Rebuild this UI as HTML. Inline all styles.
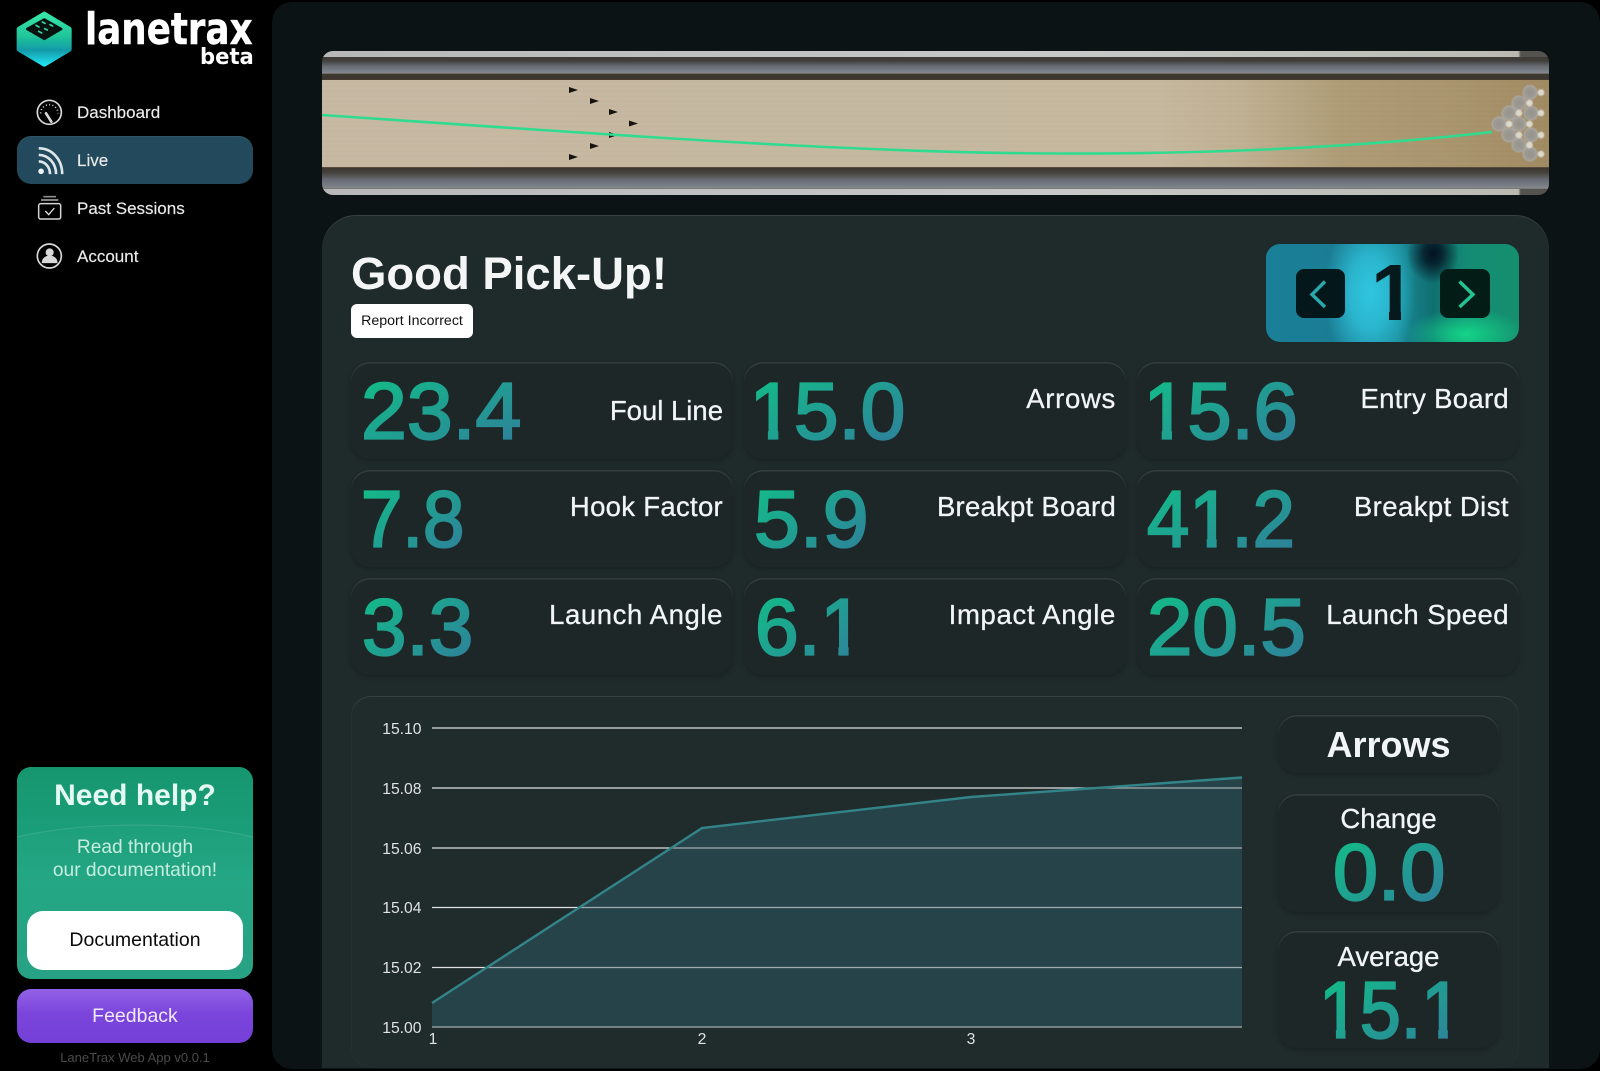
<!DOCTYPE html>
<html lang="en">
<head>
<meta charset="utf-8">
<title>LaneTrax Live</title>
<style>
*{box-sizing:border-box;margin:0;padding:0}
html,body{width:1600px;height:1071px;overflow:hidden;background:#000}
body{position:relative;font-family:"Liberation Sans",sans-serif;color:#f2f5f5}
.a{position:absolute;white-space:nowrap}
#main{left:272px;top:2px;width:1328px;height:1067px;background:#0c1314;border-radius:20px}
#panel{left:322px;top:215px;width:1227px;height:853px;background:#1f2a2b;border-radius:34px 34px 0 0;box-shadow:inset 0 1px 0 rgba(255,255,255,.11)}
.card{position:absolute;background:#1e2728;border-radius:19px;box-shadow:inset 0 1.5px 0 rgba(255,255,255,.1),0 2px 5px rgba(0,0,0,.22)}
.stat{width:382px;height:97px}
.lab{position:absolute;right:10px;font-size:27.5px;line-height:32px;color:#f2f5f5;white-space:nowrap;-webkit-text-stroke:.3px #f2f5f5}
.nav{position:absolute;left:77px;font-size:17px;line-height:20px;color:#ebebeb;white-space:nowrap;-webkit-text-stroke:.15px #ebebeb}
.ctr{position:absolute;text-align:center;white-space:nowrap}
</style>
</head>
<body>

<!-- Sidebar logo and icons -->
<svg class="a" style="left:0;top:0" width="272" height="290" viewBox="0 0 816 870">
<defs>
<linearGradient id="lg1" x1="0" y1="0" x2="0" y2="1"><stop offset="0" stop-color="#38e6a8"/><stop offset=".45" stop-color="#20c49a"/><stop offset=".72" stop-color="#129aa8"/><stop offset="1" stop-color="#22e0ee"/></linearGradient>
</defs>
<path d="M133 42 L208 87 L208 148 L133 193 L57 148 L57 87Z" fill="url(#lg1)" stroke="url(#lg1)" stroke-width="14" stroke-linejoin="round"/>
<path d="M133 58 L184 87 L133 117 L81 87Z" fill="#06120f" stroke="#06120f" stroke-width="7" stroke-linejoin="round"/>
<g stroke="#35d6a0" stroke-width="5" stroke-linecap="round">
<path d="M108 76l9 5M127 66l8 4M150 74l8 4M116 94l9 5M134 86l8 4"/>
</g>
<!-- dashboard -->
<circle cx="148" cy="337" r="36" fill="none" stroke="#d8d8d8" stroke-width="5"/>
<path d="M138 340 L154 365" stroke="#d8d8d8" stroke-width="8" stroke-linecap="round"/>
<path d="M122 340a26 26 0 0 1 52 0" fill="none" stroke="#d8d8d8" stroke-width="5" stroke-dasharray="3 7"/>
<!-- past sessions -->
<rect x="116" y="611" width="66" height="46" rx="6" fill="none" stroke="#d4d4d4" stroke-width="4.5"/>
<path d="M123 600h52" stroke="#d4d4d4" stroke-width="4"/>
<path d="M130 590h38" stroke="#8c8c8c" stroke-width="5"/>
<path d="M136 633l10 11 17-20" fill="none" stroke="#e0e0e0" stroke-width="4"/>
<!-- account -->
<circle cx="148" cy="768" r="36" fill="none" stroke="#d8d8d8" stroke-width="5"/>
<circle cx="149" cy="757" r="12" fill="#d8d8d8"/>
<path d="M127 788c0-26 44-26 44 0Z" fill="#d8d8d8" stroke="#d8d8d8" stroke-width="3"/>
</svg>

<div class="a" style="left:85px;top:5px;font-family:'DejaVu Sans',sans-serif;font-size:43.5px;line-height:50px;font-weight:700;color:#fff;transform:scaleX(.82);transform-origin:0 50%;-webkit-text-stroke:.4px #fff">lanetrax</div>
<div class="a" style="left:200px;top:45px;font-family:'DejaVu Sans',sans-serif;font-size:22px;line-height:26px;font-weight:700;color:#fff;transform:scaleX(.96);transform-origin:0 50%">beta</div>

<div class="a" style="left:17px;top:136px;width:236px;height:48px;background:#234a5c;border-radius:14px;box-shadow:inset 0 1px 0 rgba(255,255,255,.07)"></div>
<svg class="a" style="left:35px;top:145px" width="30" height="32" viewBox="0 0 32 34">
<g fill="none" stroke="#dfe6e9" stroke-width="2.8">
<path d="M4 3.500C18 3.500 29 15 29 31"/>
<path d="M4 10.500C14 10.500 22.500 19 22.500 31"/>
<path d="M4 17.500C10.500 17.500 16 23 16 31"/>
</g>
<circle cx="6.500" cy="28" r="3" fill="#eef2f3"/>
</svg>

<div class="nav" style="top:103px">Dashboard</div>
<div class="nav" style="top:151px">Live</div>
<div class="nav" style="top:199px">Past Sessions</div>
<div class="nav" style="top:247px">Account</div>

<!-- help card -->
<div class="a" style="left:17px;top:767px;width:236px;height:212px;border-radius:14px;overflow:hidden;background:linear-gradient(180deg,#16966f 0%,#1a9e79 30%,#1fa582 55%,#1f9f80 100%)">
<svg width="236" height="212" style="position:absolute;left:0;top:0">
<path d="M0 70C70 54 170 54 236 70V212H0Z" fill="#ffffff" fill-opacity=".025"/>
<path d="M0 70C70 54 170 54 236 70" fill="none" stroke="#fff" stroke-opacity=".12"/>
<path d="M0 190C70 172 170 172 236 190V212H0Z" fill="#ffffff" fill-opacity=".015"/>
</svg>
</div>
<div class="ctr" style="left:17px;width:236px;top:778px;font-size:30px;line-height:36px;font-weight:700;color:#e4f9f2">Need help?</div>
<div class="ctr" style="left:17px;width:236px;top:837.500px;font-size:19.2px;line-height:20px;color:#c5ecdf">Read through</div>
<div class="ctr" style="left:17px;width:236px;top:860.500px;font-size:19.2px;line-height:20px;color:#c5ecdf">our documentation!</div>
<div class="ctr" style="left:27px;top:911px;width:216px;height:59px;background:#fff;border-radius:16px;font-size:19.5px;line-height:59px;color:#0a0a0a">Documentation</div>
<div class="ctr" style="left:17px;top:989px;width:236px;height:54px;border-radius:14px;background:linear-gradient(180deg,#9261e6 0%,#7b45dc 45%,#7440d6 100%);font-size:19.5px;line-height:54px;color:#f0e9ff">Feedback</div>
<div class="ctr" style="left:17px;width:236px;top:1050px;font-size:13px;line-height:16px;color:#4b4b4d">LaneTrax Web App v0.0.1</div>

<!-- main -->
<div class="a" id="main"></div>

<!-- lane -->
<svg class="a" style="left:322px;top:51px" width="1227" height="144" viewBox="322 51 1227 144">
<defs>
<clipPath id="lc"><rect x="322" y="51" width="1227" height="144" rx="11"/></clipPath>
<filter id="soft"><feGaussianBlur stdDeviation=".5"/></filter>
<linearGradient id="rail" x1="0" y1="0" x2="0" y2="1">
<stop offset="0" stop-color="#3f3b37"/><stop offset=".33" stop-color="#403d3a"/>
<stop offset=".52" stop-color="#666a72"/><stop offset=".72" stop-color="#7d828a"/><stop offset=".76" stop-color="#8b8b8b"/><stop offset=".8" stop-color="#3e3931"/><stop offset="1" stop-color="#3b352c"/>
</linearGradient>
<linearGradient id="rail2" x1="0" y1="0" x2="0" y2="1">
<stop offset="0" stop-color="#3b352c"/><stop offset=".2" stop-color="#45413d"/>
<stop offset=".45" stop-color="#666a72"/><stop offset=".7" stop-color="#7d828a"/><stop offset=".76" stop-color="#8b8b8b"/><stop offset=".8" stop-color="#38352f"/><stop offset="1" stop-color="#3e3a34"/>
</linearGradient>
<linearGradient id="chrome" x1="0" y1="0" x2="1" y2="0">
<stop offset="0" stop-color="#b8b8b8"/><stop offset=".6" stop-color="#c8c8c8"/><stop offset=".93" stop-color="#bdbdb6"/><stop offset=".975" stop-color="#bbb8b0"/><stop offset=".977" stop-color="#55534f"/><stop offset="1" stop-color="#55534f"/>
</linearGradient>
<linearGradient id="wood" x1="0" y1="0" x2="1" y2="0">
<stop offset="0" stop-color="#c6b8a1"/><stop offset=".5" stop-color="#c5b8a0"/><stop offset=".68" stop-color="#c6b89e"/><stop offset=".75" stop-color="#bfb092"/><stop offset=".83" stop-color="#ae9c76"/><stop offset=".93" stop-color="#a8946c"/><stop offset="1" stop-color="#a08a62"/>
</linearGradient>
<pattern id="grain" width="900" height="5" patternUnits="userSpaceOnUse"><rect width="900" height="1" y="1" fill="#6b5a3c" fill-opacity=".025"/><rect width="900" height="1" y="3" fill="#fff" fill-opacity=".02"/></pattern>
<radialGradient id="pin" cx=".5" cy=".5" r=".55"><stop offset="0" stop-color="#96928c"/><stop offset=".65" stop-color="#9e9a94"/><stop offset="1" stop-color="#b8b4ad"/></radialGradient>
</defs>
<g clip-path="url(#lc)">
<rect x="322" y="51" width="1227" height="29" fill="url(#rail)"/>
<rect x="322" y="167" width="1227" height="28" fill="url(#rail2)"/>
<rect x="322" y="51" width="1227" height="6" fill="url(#chrome)"/>
<rect x="322" y="189" width="1227" height="6" fill="url(#chrome)"/>
<rect x="322" y="80" width="1227" height="87" fill="url(#wood)"/>
<rect x="322" y="80" width="1227" height="87" fill="url(#grain)"/>
<rect x="322" y="79" width="1227" height="1" fill="#463d30"/>
<rect x="322" y="167" width="1227" height="1" fill="#574c3b"/>
</g>
<g fill="#16130f">
<path d="M569 87l9 3-9 3zM590 98l9 3-9 3zM609 109l9 3-9 3zM629 120.500l9 3-9 3zM609 132l9 3-9 3zM590 143l9 3-9 3zM569 154l9 3-9 3z"/>
</g>
<path d="M322 115C600 134 850 153 1060 153.500C1230 154 1370 146 1492 132" fill="none" stroke="#2fdc8f" stroke-width="2.600"/>
<g filter="url(#soft)">
<g fill="url(#pin)">
<circle cx="1530" cy="92.500" r="7.500"/><circle cx="1519" cy="103" r="7.500"/><circle cx="1509" cy="113" r="7.500"/><circle cx="1531" cy="113" r="7.500"/><circle cx="1499" cy="124" r="7.500"/><circle cx="1519" cy="124" r="7.500"/><circle cx="1509" cy="135" r="7.500"/><circle cx="1531" cy="135" r="7.500"/><circle cx="1519" cy="145" r="7.500"/><circle cx="1530" cy="154" r="7.500"/>
</g>
<g fill="#dcd8cc">
<circle cx="1541" cy="92.500" r="3.300"/><circle cx="1529.500" cy="103" r="3.300"/><circle cx="1519" cy="113" r="3.300"/><circle cx="1541" cy="113" r="3.300"/><circle cx="1509" cy="124" r="3.300"/><circle cx="1529.500" cy="124" r="3.300"/><circle cx="1519" cy="135" r="3.300"/><circle cx="1541" cy="135" r="3.300"/><circle cx="1529.500" cy="145" r="3.300"/><circle cx="1541" cy="154" r="3.300"/>
</g>
</g>
</svg>

<!-- panel -->
<div class="a" id="panel"></div>
<div class="a" style="left:351px;top:247px;font-size:45.5px;line-height:54px;font-weight:700;color:#f4f6f6">Good Pick-Up!</div>
<div class="ctr" style="left:351px;top:304px;width:122px;height:34px;background:#fff;border-radius:6px;font-size:14.2px;line-height:34px;color:#111">Report Incorrect</div>

<!-- frame selector -->
<div class="a" style="left:1266px;top:244px;width:253px;height:98px;border-radius:14px;background:
radial-gradient(ellipse 26px 30px at 66% 10%,#041220 0%,rgba(4,18,32,.8) 35%,rgba(4,18,32,0) 100%),
radial-gradient(ellipse 60px 26px at 79% 92%,#14d488 0%,rgba(20,212,136,.5) 50%,rgba(20,212,136,0) 100%),
radial-gradient(ellipse 46px 80px at 41% 50%,#30c6e0 0%,rgba(48,198,224,.75) 45%,rgba(48,198,224,0) 100%),
linear-gradient(90deg,#1a7f98 0%,#1b7d94 28%,#1a8a98 52%,#0f6f70 66%,#148c74 80%,#158f6e 100%)"></div>
<div class="a" style="left:1296px;top:269px;width:49px;height:49px;border-radius:8px;background:#04181c"></div>
<div class="a" style="left:1440px;top:269px;width:50px;height:49px;border-radius:8px;background:#031c15"></div>
<svg class="a" style="left:1296px;top:269px" width="200" height="50">
<path d="M29 12.500L16 25.500 29 38" fill="none" stroke="#2aa9ad" stroke-width="3.400"/>
<path d="M163.500 12.500L177 25.500 163.500 38" fill="none" stroke="#22c491" stroke-width="3.400"/>
</svg>
<div class="a" style="left:1371px;top:253px;font-weight:700;font-size:80px;line-height:80px;color:#061a1e;clip-path:polygon(0 0,100% 0,100% 57.5px,30px 57.5px,30px 100%,18px 100%,18px 57.5px,0 57.5px)">1</div>

<!-- stat cards -->
<div class="card stat" style="left:351px;top:362px"><div class="lab" style="top:33px">Foul Line</div></div>
<div class="card stat" style="left:744px;top:362px"><div class="lab" style="top:21px;letter-spacing:.7px">Arrows</div></div>
<div class="card stat" style="left:1137px;top:362px"><div class="lab" style="top:21px;letter-spacing:.3px">Entry Board</div></div>
<div class="card stat" style="left:351px;top:470px"><div class="lab" style="top:21px;letter-spacing:.3px">Hook Factor</div></div>
<div class="card stat" style="left:744px;top:470px"><div class="lab" style="top:21px;letter-spacing:.25px">Breakpt Board</div></div>
<div class="card stat" style="left:1137px;top:470px"><div class="lab" style="top:21px;letter-spacing:.45px">Breakpt Dist</div></div>
<div class="card stat" style="left:351px;top:578px"><div class="lab" style="top:21px;letter-spacing:.6px">Launch Angle</div></div>
<div class="card stat" style="left:744px;top:578px"><div class="lab" style="top:21px;letter-spacing:.7px">Impact Angle</div></div>
<div class="card stat" style="left:1137px;top:578px"><div class="lab" style="top:21px;letter-spacing:.45px">Launch Speed</div></div>

<!-- chart card -->
<div class="a" style="left:351px;top:696px;width:1168px;height:372px;border-radius:20px;background:#202b2c;box-shadow:inset 0 1px 0 rgba(255,255,255,.09),inset 0 0 0 1px rgba(255,255,255,.018)"></div>
<svg class="a" style="left:351px;top:696px" width="920" height="372" viewBox="351 696 920 372">
<path d="M432 1003L702 828 971 797 1242 777.500V1027H432Z" fill="#264349"/>
<g stroke-width="1.300">
<path d="M432 728H1242M432 788H1242" stroke="#dfe2e2"/>
<path d="M432 848H1242M432 907.500H1242M432 967.500H1242M432 1027H1242" stroke="#dfe2e2"/>
</g>
<path d="M671 848H1242M579 907.500H1242M487 967.500H1242M432 1027H1242M1096 788H1242" stroke="#264349" stroke-opacity=".35" stroke-width="1.400"/>
<path d="M432 1003L702 828 971 797 1242 777.500" fill="none" stroke="#338489" stroke-width="2.400"/>
<g font-family="Liberation Sans, sans-serif" font-size="15.700" fill="#dfe2e2" text-anchor="end">
<text x="421.500" y="734">15.10</text><text x="421.500" y="794">15.08</text><text x="421.500" y="854">15.06</text><text x="421.500" y="913">15.04</text><text x="421.500" y="973">15.02</text><text x="421.500" y="1033">15.00</text>
</g>
<g font-family="Liberation Sans, sans-serif" font-size="15.700" fill="#dfe2e2" text-anchor="middle">
<text x="433" y="1044">1</text><text x="702" y="1044">2</text><text x="971" y="1044">3</text>
</g>
</svg>

<div class="card" style="left:1278px;top:715px;width:221px;height:58px"></div>
<div class="ctr" style="left:1278px;width:221px;top:725px;font-size:36px;line-height:40px;font-weight:700;color:#f2f5f5">Arrows</div>

<div class="card" style="left:1278px;top:794px;width:221px;height:118px"></div>
<div class="ctr" style="left:1278px;width:221px;top:803px;font-size:27.500px;line-height:32px;color:#f2f5f5;-webkit-text-stroke:.3px #f2f5f5">Change</div>

<div class="card" style="left:1278px;top:931px;width:221px;height:117px"></div>
<div class="ctr" style="left:1278px;width:221px;top:941px;font-size:27.500px;line-height:32px;color:#f2f5f5;-webkit-text-stroke:.3px #f2f5f5">Average</div>

<!-- gradient numbers -->
<svg class="a" style="left:0;top:0" width="1600" height="1071" viewBox="0 0 1600 1071">
<defs>
<linearGradient id="ng" x1="0" y1="0" x2="1" y2="1"><stop offset=".05" stop-color="#12bd88"/><stop offset=".95" stop-color="#2f7f9b"/></linearGradient>
<clipPath id="c1"><rect x="-5" y="-80" width="300" height="71.500"/><rect x="18.400" y="-9" width="10.400" height="21"/><rect x="44" y="-9" width="300" height="21"/></clipPath>
<clipPath id="c41"><rect x="-5" y="-80" width="300" height="71.500"/><rect x="-5" y="-9" width="49.500" height="21"/><rect x="62.900" y="-9" width="10.400" height="21"/><rect x="88" y="-9" width="200" height="21"/></clipPath>
<clipPath id="c61"><rect x="-5" y="-80" width="300" height="71.500"/><rect x="-5" y="-9" width="69" height="21"/><rect x="85.100" y="-9" width="10.400" height="21"/></clipPath>
<clipPath id="c151"><rect x="-5" y="-80" width="300" height="71.500"/><rect x="18.400" y="-9" width="10.400" height="21"/><rect x="44" y="-9" width="68" height="21"/><rect x="129.600" y="-9" width="10.400" height="21"/></clipPath>
</defs>
<g font-family="Liberation Sans, sans-serif" font-size="80" fill="url(#ng)" stroke="url(#ng)" stroke-width="2.200">
<g transform="translate(361 438.700) scale(1.03 1)"><text>23.4</text></g>
<g transform="translate(749.500 438.700) scale(1 1)" clip-path="url(#c1)"><text>15.0</text></g>
<g transform="translate(1143.500 438.700) scale(.99 1)" clip-path="url(#c1)"><text>15.6</text></g>
<g transform="translate(361 546.700) scale(.93 1)"><text>7.8</text></g>
<g transform="translate(754 546.700) scale(1.03 1)"><text>5.9</text></g>
<g transform="translate(1147 546.700) scale(.95 1)" clip-path="url(#c41)"><text>41.2</text></g>
<g transform="translate(362 654.700)"><text>3.3</text></g>
<g transform="translate(755 654.700) scale(.98 1)" clip-path="url(#c61)"><text>6.1</text></g>
<g transform="translate(1147 654.700) scale(1.02 1)"><text>20.5</text></g>
<g transform="translate(1333 899.700) scale(1.01 1)"><text>0.0</text></g>
<g transform="translate(1319 1037.700) scale(.92 1)" clip-path="url(#c151)"><text>15.1</text></g>
</g>
</svg>

</body>
</html>
